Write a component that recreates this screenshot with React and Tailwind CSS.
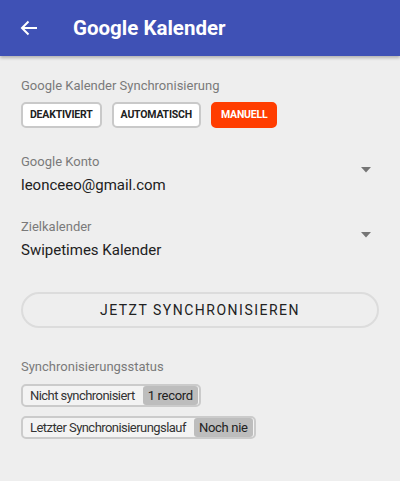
import React from 'react';

const font = { fontFamily: 'Roboto, "Noto Sans", sans-serif' };

const ModeButton = ({ label, active }) => (
  <button
    className={
      active
        ? 'h-[26px] px-[8px] rounded-[5px] border-2 border-[#ff3d00] bg-[#ff3d00] text-white text-[10.5px] font-bold tracking-[-0.2px]'
        : 'h-[26px] px-[7px] rounded-[5px] border-2 border-[#c9c9c9] bg-white text-[#212121] text-[10.5px] font-bold tracking-[-0.2px]'
    }
  >
    {label}
  </button>
);

const Caret = () => (
  <svg width="10" height="6" viewBox="0 0 10 6" className="shrink-0">
    <path d="M0 0h10L5 5.5z" fill="#757575" />
  </svg>
);

const Picker = ({ label, value, className }) => (
  <div className={'flex items-center ' + className}>
    <div className="flex-1">
      <div className="text-[13px] leading-4 text-[#7a7a7a]">{label}</div>
      <div className="mt-[5px] text-[15px] leading-5 text-[#212121]">{value}</div>
    </div>
    <div className="pr-[8px] -mt-[10px]">
      <Caret />
    </div>
  </div>
);

const StatusChip = ({ label, value }) => (
  <div className="flex w-fit items-center h-[23px] rounded-[5px] border-2 border-[#cbcbcb] bg-[#f3f3f3] pl-[7px] pr-[1px]">
    <span className="text-[13px] tracking-[-0.55px] text-[#333]">{label}</span>
    <span className="ml-[8px] h-[19px] leading-[19px] px-[5px] rounded-[3px] bg-[#bdbdbd] text-[13px] text-[#212121] tracking-[-0.3px]">
      {value}
    </span>
  </div>
);

export default function App() {
  return (
    <div className="min-h-[481px] bg-[#eeeeee]" style={font}>
      <header className="h-14 bg-[#3f51b5] flex items-center shadow-[0_2px_3px_rgba(0,0,0,0.25)] relative">
        <svg width="18" height="16" viewBox="0 0 18 16" className="ml-[20px]">
          <path d="M17 8H2M8.5 1.5L2 8l6.5 6.5" fill="none" stroke="#fff" strokeWidth="2" />
        </svg>
        <h1 className="ml-[35px] text-[20.5px] font-bold text-white">Google Kalender</h1>
      </header>

      <main className="px-[21px] pt-[22px]">
        <div className="text-[13px] leading-4 text-[#7a7a7a]">Google Kalender Synchronisierung</div>
        <div className="mt-[8px] flex gap-[10px]">
          <ModeButton label="DEAKTIVIERT" />
          <ModeButton label="AUTOMATISCH" />
          <ModeButton label="MANUELL" active />
        </div>

        <Picker className="mt-[26px]" label="Google Konto" value="leonceeo@gmail.com" />
        <Picker className="mt-[24px]" label="Zielkalender" value="Swipetimes Kalender" />

        <button className="mt-[32px] w-full h-[36px] rounded-full border-2 border-[#dcdcdc] text-[14px] font-normal tracking-[1.5px] text-[#222]">
          JETZT SYNCHRONISIEREN
        </button>

        <div className="mt-[31px] text-[13px] leading-4 text-[#7a7a7a]">Synchronisierungsstatus</div>
        <div className="mt-[9px] flex flex-col gap-[9px]">
          <StatusChip label="Nicht synchronisiert" value="1 record" />
          <StatusChip label="Letzter Synchronisierungslauf" value="Noch nie" />
        </div>
      </main>
    </div>
  );
}
